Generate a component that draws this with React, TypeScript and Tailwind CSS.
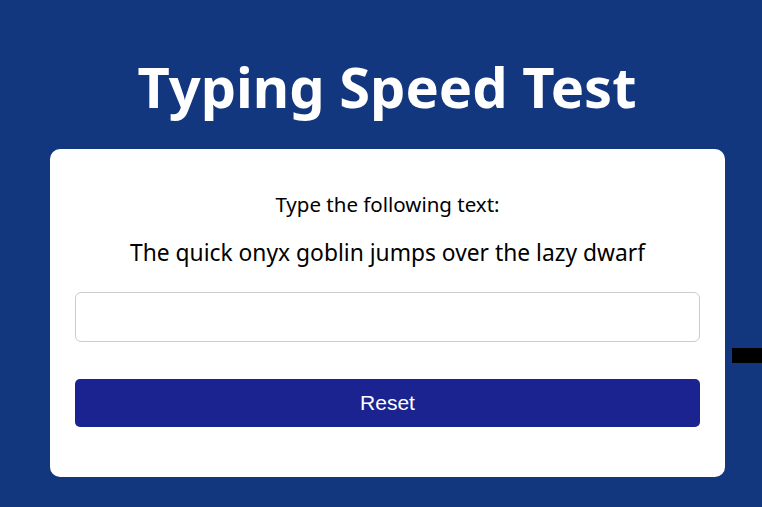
export default function App() {
  return (
    <div className="h-[507px] w-full overflow-hidden bg-[#12377f]">
      <div className="flex w-[774px] flex-col">
        {/* Title */}
        <h1 className="pt-[49px] pb-[25px] text-center font-['Noto_Sans',sans-serif] text-[56px] leading-[75px] font-bold text-white">
          Typing Speed Test
        </h1>

        {/* Card + stray bar */}
        <div className="flex gap-[7px] pl-[50px]">
          <div className="flex w-[675px] shrink-0 flex-col rounded-[10px] bg-white px-[25px] pt-[42px] pb-[50px] font-['Noto_Sans',sans-serif] text-black">
            <p className="text-center text-[20.5px] leading-[26px]">Type the following text:</p>
            <p className="mt-[20px] text-center text-[22.8px] leading-[31px]">
              The quick onyx goblin jumps over the lazy dwarf
            </p>
            <input
              type="text"
              className="mt-[24px] h-[50px] w-full rounded-[6px] border border-[#cccccc] bg-white px-3 text-[18px] outline-none"
            />
            <button className="mt-[37px] h-[48px] w-full rounded-[5px] bg-[#1a2390] font-['Liberation_Sans',sans-serif] text-[21px] text-white">
              Reset
            </button>
          </div>
          <div className="mt-[199px] h-[15px] w-[40px] shrink-0 bg-black" />
        </div>
      </div>
    </div>
  )
}
